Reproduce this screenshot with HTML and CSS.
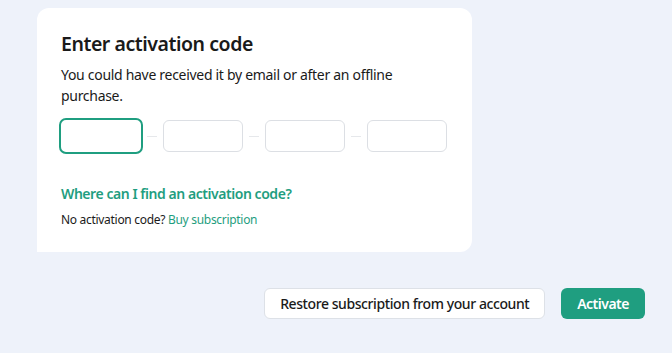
FILE: index.html
```html
<!DOCTYPE html>
<html lang="en">
<head>
    <meta charset="UTF-8">
    <meta name="viewport" content="width=device-width, initial-scale=1.0">
    <title>Activation</title>
    <link rel="stylesheet" href="styles.css">
</head>
<body>
    <div class="page">
        <div class="card">
            <h1>Enter activation code</h1>
            <p class="hint">You could have received it by email or after an offline purchase.</p>
            <div class="code-row">
                <input type="text" class="code-box focused">
                <span class="dash"></span>
                <input type="text" class="code-box">
                <span class="dash"></span>
                <input type="text" class="code-box">
                <span class="dash"></span>
                <input type="text" class="code-box">
            </div>
            <a href="#" class="help-link">Where can I find an activation code?</a>
            <p class="buy">No activation code? <a href="#">Buy subscription</a></p>
        </div>
        <div class="actions">
            <button class="restore-btn">Restore subscription from your account</button>
            <button class="activate-btn">Activate</button>
        </div>
    </div>
</body>
</html>
```

FILE: styles.css
```css
body {
    margin: 0;
    background-color: #eef2fa;
    font-family: "Noto Sans", "Open Sans", sans-serif;
    color: #1a1a1a;
}
.page {
    width: 672px;
    height: 353px;
}
.card {
    box-sizing: border-box;
    margin: 8px 0 0 37px;
    width: 435px;
    height: 244px;
    padding: 22px 24px 0 24px;
    background-color: #ffffff;
    border-radius: 12px 12px 12px 0;
}
.card h1 {
    margin: 0;
    font-size: 19.5px;
    font-weight: 600;
    line-height: 28px;
    letter-spacing: -0.45px;
}
.hint {
    margin: 6px 0 0 0;
    max-width: 350px;
    font-size: 14px;
    line-height: 21px;
    letter-spacing: -0.3px;
}
.code-row {
    display: flex;
    align-items: center;
    height: 36px;
    margin-top: 12px;
}
.code-box {
    box-sizing: border-box;
    width: 80px;
    height: 32px;
    margin: 0;
    border: 1px solid #dcdfe4;
    border-radius: 6px;
    background: #fff;
    outline: none;
}
.code-box.focused {
    width: 84px;
    height: 36px;
    margin: 0 -2px;
    border: 2px solid #1f9e80;
    border-radius: 7px;
}
.dash {
    width: 10px;
    height: 1px;
    margin: 0 6px;
    background-color: #e6e8eb;
}
.help-link {
    display: block;
    margin-top: 30px;
    font-size: 14px;
    font-weight: 600;
    line-height: 20px;
    letter-spacing: -0.45px;
    color: #1f9e80;
    text-decoration: none;
}
.buy {
    margin: 7px 0 0 0;
    font-size: 12px;
    line-height: 18px;
    letter-spacing: -0.3px;
}
.buy a {
    color: #1f9e80;
    text-decoration: none;
}
.actions {
    display: flex;
    justify-content: flex-end;
    gap: 16px;
    margin: 36px 27px 0 0;
}
.restore-btn, .activate-btn {
    height: 31px;
    font-family: inherit;
    font-size: 14px;
    border-radius: 6px;
    cursor: pointer;
}
.restore-btn {
    padding: 0 15px;
    background-color: #ffffff;
    border: 1px solid #dde1e7;
    color: #1a1a1a;
    font-weight: 500;
    letter-spacing: -0.42px;
}
.activate-btn {
    padding: 0 16px;
    background-color: #1f9e80;
    border: none;
    color: #ffffff;
    font-weight: 600;
    letter-spacing: -0.5px;
}
```
